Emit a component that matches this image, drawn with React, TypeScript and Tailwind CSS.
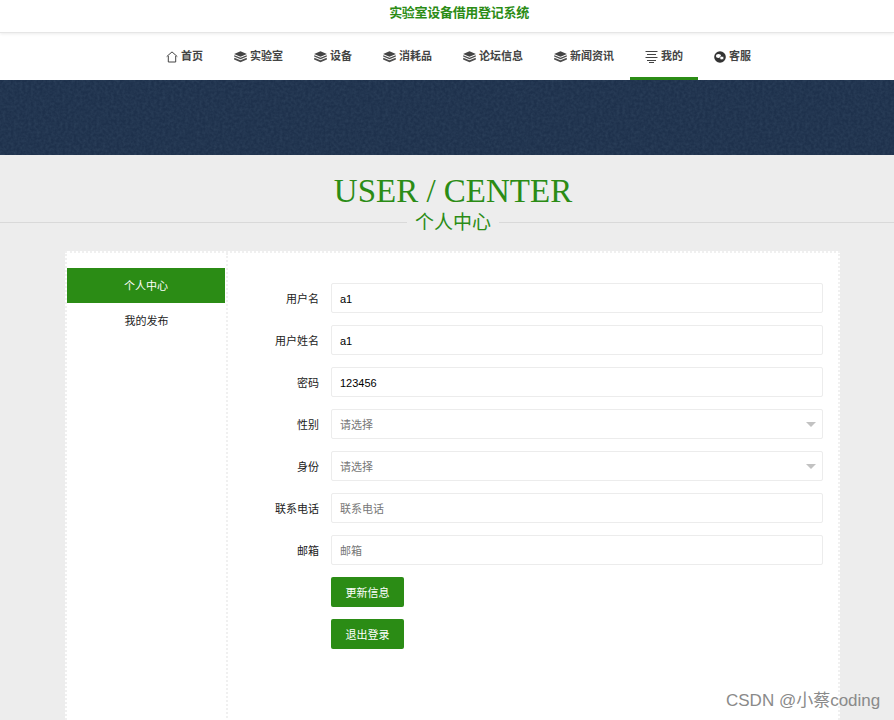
const GREEN = 'bg-[#2b8c15]';

const StackIcon = () => (
  <svg width="13" height="12" viewBox="0 0 13 12" className="shrink-0">
    <path d="M6.5 0.3 L12.9 3 L6.5 5.7 L0.1 3 Z" fill="#444" />
    <path d="M0.3 4.2 L6.5 6.8 L12.7 4.2 L12.9 5.6 L6.5 8.2 L0.1 5.6 Z" fill="#4d4d4d" />
    <path d="M0.3 6.7 L6.5 9.3 L12.7 6.7 L12.9 8.4 L6.5 11.2 L0.1 8.4 Z" fill="#4d4d4d" />
  </svg>
);

const HomeIcon = () => (
  <svg width="12" height="12" viewBox="0 0 12 12" fill="none" stroke="#444" strokeWidth="1" className="shrink-0">
    <path d="M0.7 5.6 L6 0.9 L11.3 5.6 M2.3 5 V11 H9.7 V5" />
  </svg>
);

const MenuIcon = () => (
  <svg width="13" height="13" viewBox="0 0 13 13" stroke="#444" strokeWidth="1" className="shrink-0">
    <path d="M0.5 1.5 H12.5 M2 4.5 H11 M0.5 7.5 H12.5 M2 10.5 H11 M4 12.5 H9" />
  </svg>
);

const ChatIcon = () => (
  <svg width="12" height="12" viewBox="0 0 12 12" className="shrink-0">
    <circle cx="6" cy="6" r="5.8" fill="#333" />
    <ellipse cx="4.5" cy="5" rx="2.6" ry="2.1" fill="#fff" />
    <ellipse cx="7.8" cy="7" rx="2.1" ry="1.7" fill="#fff" stroke="#333" strokeWidth="0.6" />
  </svg>
);

const navItems = [
  { label: '首页', icon: <HomeIcon /> },
  { label: '实验室', icon: <StackIcon /> },
  { label: '设备', icon: <StackIcon /> },
  { label: '消耗品', icon: <StackIcon /> },
  { label: '论坛信息', icon: <StackIcon /> },
  { label: '新闻资讯', icon: <StackIcon /> },
  { label: '我的', icon: <MenuIcon />, active: true },
  { label: '客服', icon: <ChatIcon /> },
];

const fields = [
  { label: '用户名', value: 'a1' },
  { label: '用户姓名', value: 'a1' },
  { label: '密码', value: '123456' },
  { label: '性别', placeholder: '请选择', select: true },
  { label: '身份', placeholder: '请选择', select: true },
  { label: '联系电话', placeholder: '联系电话' },
  { label: '邮箱', placeholder: '邮箱' },
];

const FormRow = ({ label, value, placeholder, select }: { label: string; value?: string; placeholder?: string; select?: boolean }) => (
  <div className="flex items-center mb-3">
    <label className="w-[91px] pt-[2px] text-right text-[11px] text-[#222] mr-3">{label}</label>
    <div className="relative flex-1 h-[30px] bg-white border border-[#ececec] rounded-[2px] px-2 pt-[2px] flex items-center text-[11px]">
      {value ? <span className="text-black">{value}</span> : <span className="text-[#777]">{placeholder}</span>}
      {select && (
        <span className="absolute right-[6px] top-[12px] w-0 h-0 border-x-[5px] border-x-transparent border-t-[5px] border-t-[#c2c2c2]" />
      )}
    </div>
  </div>
);

export default function App() {
  return (
    <div
      className="relative h-[720px] overflow-hidden bg-[#ededed]"
      style={{ fontFamily: '"Liberation Sans", "Noto Sans CJK SC", sans-serif' }}
    >
      {/* Title */}
      <div className="relative h-[33px] pl-[24px] bg-white border-b border-[#e6e6e6] shadow-[0_1px_3px_rgba(0,0,0,0.08)] text-center text-[13px] tracking-[-0.3px] font-bold text-[#2b8c15] leading-[26px]">
        实验室设备借用登记系统
      </div>

      {/* Nav */}
      <nav className="h-[47px] bg-white flex justify-center pl-[24px]">
        {navItems.map((item) => (
          <div
            key={item.label}
            className="relative h-full flex items-center gap-[3px] px-[15px] mr-[1px] text-[11px] font-bold text-[#444]"
          >
            {item.icon}
            <span>{item.label}</span>
            {item.active && <span className="absolute left-0 right-0 bottom-0 h-[3px] bg-[#2b8c15]" />}
          </div>
        ))}
      </nav>

      {/* Banner */}
      <div className="relative h-[75px] bg-[#1e314c] overflow-hidden">
        <svg width="894" height="75" className="block">
          <filter id="banner-noise">
            <feTurbulence type="fractalNoise" baseFrequency="0.35" numOctaves="2" seed="4" />
            <feColorMatrix values="0 0 0 0 0.08  0 0 0 0 0.14  0 0 0 0 0.22  0 0 0 0.4 -0.12" />
          </filter>
          <rect width="894" height="75" filter="url(#banner-noise)" />
        </svg>
      </div>

      {/* Heading */}
      <div className="text-center text-[#2b8c15] h-[96px] relative pl-[12px]">
        <div className="absolute left-0 right-0 top-[67px] h-px bg-[#d9d9d9]" />
        <h1 className="pt-[16px] text-[33px] leading-[40px]" style={{ fontFamily: '"Liberation Serif", serif' }}>
          USER / CENTER
        </h1>
        <h2 className="relative inline-block bg-[#ededed] px-2 text-[19px] leading-[22px] mt-px">个人中心</h2>
      </div>

      {/* Card */}
      <div className="ml-[65px] w-[775px] h-[600px] bg-white border-2 border-dotted border-[#f0f0f0] flex">
        <aside className="w-[161px] border-r-2 border-dotted border-[#f0f0f0] pt-[15px] shrink-0">
          <div className={`h-[35px] w-[158px] pt-px ${GREEN} text-white text-[11px] flex items-center justify-center`}>个人中心</div>
          <div className="h-[35px] mt-px text-[#222] text-[11px] flex items-center justify-center">我的发布</div>
        </aside>
        <main className="flex-1 pt-[30px] pr-[15px]">
          {fields.map((f) => (
            <FormRow key={f.label} {...f} />
          ))}
          <button className={`block ml-[103px] mb-3 w-[73px] h-[30px] pt-[2px] ${GREEN} text-white text-[11px] rounded-[2px]`}>更新信息</button>
          <button className={`block ml-[103px] w-[73px] h-[30px] pt-[2px] ${GREEN} text-white text-[11px] rounded-[2px]`}>退出登录</button>
        </main>
      </div>

      {/* Watermark */}
      <div className="absolute left-[726px] top-[690px] text-[17px] leading-[22px] text-[#8a8a8a] whitespace-nowrap">CSDN @小蔡coding</div>
    </div>
  );
}
